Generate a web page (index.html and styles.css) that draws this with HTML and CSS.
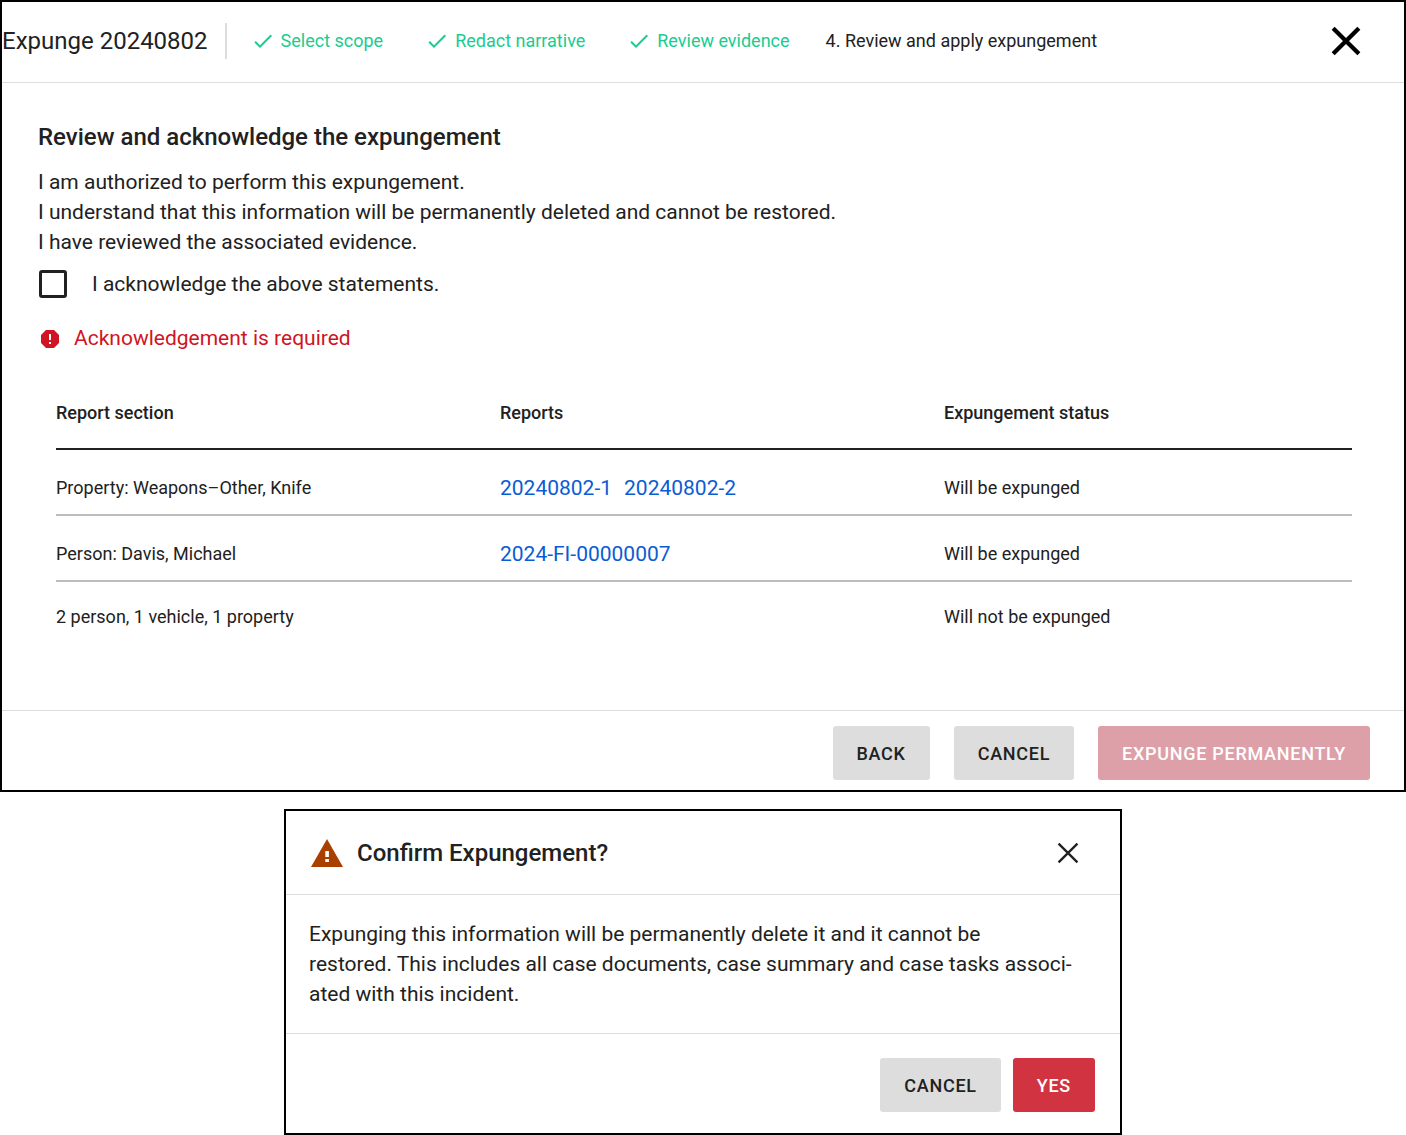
FILE: index.html
```html
<!DOCTYPE html>
<html lang="en">
<head>
<meta charset="UTF-8">
<meta name="viewport" content="width=device-width,initial-scale=1">
<title>Expunge 20240802</title>
<link rel="stylesheet" href="styles.css">
</head>
<body>
<main class="panel">
<header class="panel-head">
<h1>Expunge 20240802</h1>
<ol class="steps">
<li class="done"><svg class="check" viewBox="0 0 24 24"><path d="M9 16.17 4.83 12l-1.42 1.41L9 19 21 7l-1.41-1.41z"/></svg>Select scope</li>
<li class="done"><svg class="check" viewBox="0 0 24 24"><path d="M9 16.17 4.83 12l-1.42 1.41L9 19 21 7l-1.41-1.41z"/></svg>Redact narrative</li>
<li class="done"><svg class="check" viewBox="0 0 24 24"><path d="M9 16.17 4.83 12l-1.42 1.41L9 19 21 7l-1.41-1.41z"/></svg>Review evidence</li>
<li>4. Review and apply expungement</li>
</ol>
<button class="close close-lg" aria-label="Close"><svg viewBox="0 0 28 28"><path d="M2 2 26 26M26 2 2 26"/></svg></button>
</header>

<section class="content">
<h2>Review and acknowledge the expungement</h2>
<p>I am authorized to perform this expungement.<br>
I understand that this information will be permanently deleted and cannot be restored.<br>
I have reviewed the associated evidence.</p>
<div class="ack">
<input type="checkbox" id="ack">
<label for="ack">I acknowledge the above statements.</label>
</div>
<div class="error"><svg viewBox="0 0 20 20"><path fill="#d01424" d="M6 2h8l5 5v8l-5 5H6l-5-5V7z"/><path fill="#fff" d="M9 6h2v6H9zM9 14h2v2H9z"/></svg>Acknowledgement is required</div>

<table>
<thead>
<tr><th>Report section</th><th>Reports</th><th>Expungement status</th></tr>
</thead>
<tbody>
<tr><td>Property: Weapons–Other, Knife</td><td><a href="#">20240802-1</a><a href="#">20240802-2</a></td><td>Will be expunged</td></tr>
<tr><td>Person: Davis, Michael</td><td><a href="#">2024-FI-00000007</a></td><td>Will be expunged</td></tr>
<tr><td>2 person, 1 vehicle, 1 property</td><td></td><td>Will not be expunged</td></tr>
</tbody>
</table>
</section>

<footer class="panel-foot">
<button class="btn">BACK</button>
<button class="btn">CANCEL</button>
<button class="btn btn-danger" disabled>EXPUNGE PERMANENTLY</button>
</footer>
</main>

<section class="modal" role="dialog" aria-labelledby="confirm-title">
<header class="modal-head">
<svg class="warn" viewBox="0 0 32 28"><path fill="#aa4000" d="M16 0 32 28H0z"/><path fill="#fff" d="M14.3 12h3.6v6h-3.6zM14.3 20h3.6v3h-3.6z"/></svg>
<h2 id="confirm-title">Confirm Expungement?</h2>
<button class="close" aria-label="Close"><svg viewBox="0 0 28 28"><path d="M2 2 26 26M26 2 2 26"/></svg></button>
</header>
<p>Expunging this information will be permanently delete it and it cannot be<br>
restored. This includes all case documents, case summary and case tasks associ&shy;ated with this incident.</p>
<footer class="modal-foot">
<button class="btn">CANCEL</button>
<button class="btn btn-danger">YES</button>
</footer>
</section>
</body>
</html>
```
FILE: styles.css
```css
*{box-sizing:border-box}
body{margin:0;font-family:Roboto,"Liberation Sans",sans-serif;font-size:21px;line-height:30px;color:#212121;background:#fff}
h1,h2,p{margin:0}
h1{font-size:24px;font-weight:400}
h2{font-size:24px;font-weight:500}

.panel{border:2px solid #000}
.panel-head{display:flex;align-items:center;height:81px;padding:0 43px 2px 0;border-bottom:1px solid #ddd}
.panel-head h1{padding-right:17px;border-right:2px solid #ddd;line-height:36px}
.steps{display:flex;gap:36px;flex:1;margin:0;padding:0 0 0 24px;list-style:none;font-size:18px}
.steps li{display:flex;align-items:center}
.done{color:#19cc8f}
.check{width:24px;height:24px;margin-right:6px;fill:currentColor}
.done+.done{padding-left:6px}

.close{display:flex;padding:0;border:0;background:none;color:#212121;cursor:pointer}
.close svg{width:22px;height:22px;stroke:currentColor;stroke-width:3;fill:none}
.close-lg{color:#000}
.close-lg svg{width:30px;height:30px;stroke-width:4}

.content{padding:38px 52px 63px 36px}
.content h2{line-height:32px;margin-bottom:14px}
.ack{display:flex;align-items:center;gap:25px;margin-top:12px;padding-left:1px}
.ack input{appearance:none;width:28px;height:28px;margin:0;border:3px solid #212121;border-radius:3px}
.ack input:checked{background:#212121}
.error{display:flex;align-items:center;gap:14px;margin-top:24px;padding-left:2px;color:#d01424}
.error svg{width:20px;height:20px}

table{width:calc(100% - 18px);margin:30px 0 0 18px;border-collapse:collapse;table-layout:fixed;font-size:18px}
th,td{padding:0;text-align:left}
th{height:66px;padding-bottom:6px;font-weight:500;border-bottom:2px solid #212121}
td{height:66px;padding-top:12px;border-bottom:2px solid #bdbdbd}
tr:last-child td{border-bottom:0;padding-top:4px}
th:first-child,th:nth-child(2){width:444px}
a{color:#0a5cd5;font-size:21px;text-decoration:none}
a+a{margin-left:12px}

.panel-foot{display:flex;justify-content:flex-end;gap:24px;padding:15px 34px 10px;border-top:1px solid #ddd}
.btn{height:54px;padding:0 24px;border:0;border-radius:3px;background:#ddd;color:#212121;font:500 18px Roboto,"Liberation Sans",sans-serif;letter-spacing:.04em;cursor:pointer}
.btn-danger{background:#d13440;color:#fff}
.btn-danger:disabled{background:#dea0a8;cursor:default}

.modal{max-width:838px;margin:17px auto 0;border:2px solid #000}
.modal-head{display:flex;align-items:center;gap:14px;height:84px;padding:0 41px 0 25px;border-bottom:1px solid #ddd}
.modal-head h2{flex:1}
.warn{width:32px;height:28px}
.modal p{padding:24px 36px 24px 23px}
.modal-foot{display:flex;justify-content:flex-end;gap:12px;padding:24px 25px 21px;border-top:1px solid #ddd}
```
